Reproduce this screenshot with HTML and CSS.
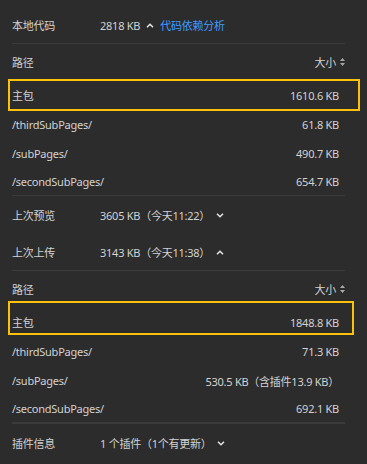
FILE: index.html
```html
<!DOCTYPE html>
<html lang="zh-CN">
<head>
    <meta charset="UTF-8">
    <title>代码质量</title>
    <link rel="stylesheet" href="styles.css">
</head>
<body>
    <div class="panel">

        <div class="summary">
            <span class="label">本地代码</span>
            <span class="value">2818 KB</span>
            <svg class="chevron" viewBox="0 0 8 5"><path d="M1 4.2 L4 1.2 L7 4.2"/></svg>
            <a class="link" href="#">代码依赖分析</a>
        </div>

        <div class="table">
            <div class="thead">
                <span>路径</span>
                <span class="sort">大小
                    <svg viewBox="0 0 5 8"><path d="M2.5 0 L5 3 L0 3 Z M2.5 8 L5 5 L0 5 Z"/></svg>
                </span>
            </div>
            <div class="row main main-local"><span>主包</span><span class="size">1610.6 KB</span></div>
            <div class="row"><span>/thirdSubPages/</span><span class="size">61.8 KB</span></div>
            <div class="row"><span>/subPages/</span><span class="size">490.7 KB</span></div>
            <div class="row last"><span>/secondSubPages/</span><span class="size">654.7 KB</span></div>
        </div>

        <div class="summary plain preview">
            <span class="label">上次预览</span>
            <span class="value">3605 KB（今天11:22）</span>
            <svg class="chevron" viewBox="0 0 8 5"><path d="M1 0.8 L4 3.8 L7 0.8"/></svg>
        </div>

        <div class="summary">
            <span class="label">上次上传</span>
            <span class="value">3143 KB（今天11:38）</span>
            <svg class="chevron" viewBox="0 0 8 5"><path d="M1 4.2 L4 1.2 L7 4.2"/></svg>
        </div>

        <div class="table">
            <div class="thead">
                <span>路径</span>
                <span class="sort">大小
                    <svg viewBox="0 0 5 8"><path d="M2.5 0 L5 3 L0 3 Z M2.5 8 L5 5 L0 5 Z"/></svg>
                </span>
            </div>
            <div class="row main main-upload"><span>主包</span><span class="size">1848.8 KB</span></div>
            <div class="row"><span>/thirdSubPages/</span><span class="size">71.3 KB</span></div>
            <div class="row"><span>/subPages/</span><span class="size">530.5 KB（含插件13.9 KB）</span></div>
            <div class="row last"><span>/secondSubPages/</span><span class="size">692.1 KB</span></div>
        </div>

        <div class="summary plain plugin">
            <span class="label">插件信息</span>
            <span class="value">1 个插件（1个有更新）</span>
            <svg class="chevron" viewBox="0 0 8 5"><path d="M1 0.8 L4 3.8 L7 0.8"/></svg>
        </div>

    </div>
</body>
</html>
```

FILE: styles.css
```css
body {
    margin: 0;
    background-color: #2c2c2c;
    color: #d2d2d2;
    font-family: "Noto Sans", "Noto Sans CJK SC", sans-serif;
    font-size: 11px;
    letter-spacing: -0.25px;
}

.panel {
    padding: 7px 22px 0 12px;
}

.summary {
    display: flex;
    align-items: center;
    height: 36px;
    border-bottom: 1px solid #3b3b3b;
}

.summary.plain {
    border-bottom: none;
}

.summary.preview {
    height: 38px;
}

.summary.plugin {
    height: 38px;
    border-top: 1px solid #3b3b3b;
}

.summary .label {
    width: 88px;
}

.chevron {
    width: 8px;
    height: 5px;
    margin-left: 6px;
    fill: none;
    stroke: #e6e6e6;
    stroke-width: 1.5;
}

.link {
    margin-left: 6px;
    color: #3d9bff;
    text-decoration: none;
}

.table {
    border-bottom: 1px solid #3b3b3b;
}

.thead {
    display: flex;
    justify-content: space-between;
    align-items: center;
    height: 36px;
}

.sort {
    display: flex;
    align-items: center;
}

.sort svg {
    width: 5px;
    height: 8px;
    margin-left: 4px;
    fill: #a8a8a8;
}

.row {
    display: flex;
    justify-content: space-between;
    align-items: center;
    height: 29px;
    padding-right: 6px;
}

.row.last {
    height: 27px;
}

.row.main {
    height: 30px;
    position: relative;
}

.row.main::after {
    content: "";
    position: absolute;
    border: 2px solid #fcc10a;
}

.main-local::after {
    top: -1px;
    bottom: -1px;
    left: -4px;
    right: -15px;
}

.main-upload::after {
    top: -6px;
    bottom: 2px;
    left: -4px;
    right: -9px;
}
```
